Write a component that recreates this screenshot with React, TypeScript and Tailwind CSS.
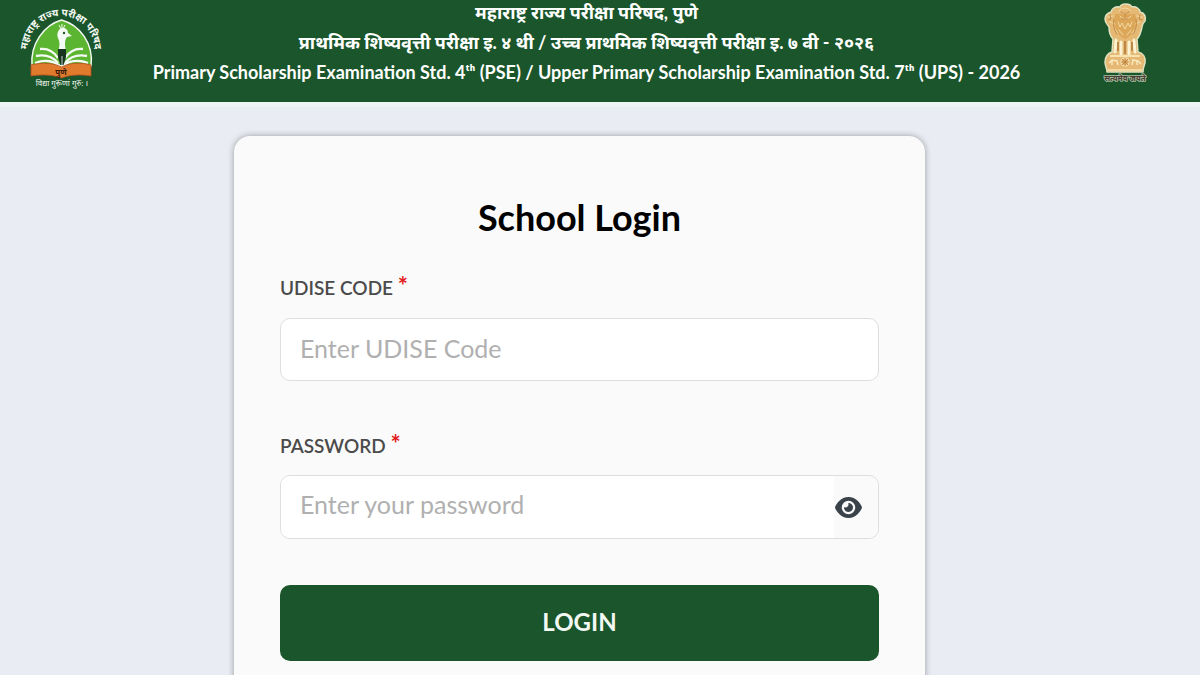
import React, { useState } from "react";
import { FaEye, FaEyeSlash } from "react-icons/fa6";

const CouncilLogo = () => (
  <svg
    viewBox="0 0 84 84"
    className="h-[84px] w-[84px] shrink-0 overflow-visible"
    role="img"
    aria-label="महाराष्ट्र राज्य परीक्षा परिषद"
  >
    <defs>
      <path id="logo-arc" d="M7 53 C4 -3 78 -3 75 53" />
    </defs>
    <text fill="#f4faf4" fontSize="10" fontWeight="700">
      <textPath href="#logo-arc" startOffset="50%" textAnchor="middle">
        महाराष्ट्र राज्य परीक्षा परिषद
      </textPath>
    </text>
    <path
      d="M12 61 C10 39 24 20 41.500 15 C60 20 74 39 71 61 Z"
      fill="#5cb531"
      stroke="#f4faf4"
      strokeWidth="1.500"
    />
    {/* open book */}
    <g fill="none" stroke="#f4faf4" strokeWidth="2.400">
      <path d="M15 58 C25 54 35 56 41 62 C48 56 58 54 68 58" />
      <path d="M16 51 C26 49 33 52 38 58" />
      <path d="M67 51 C57 49 50 52 45 58" />
      <path d="M20 44 C28 43 34 47 38 53" />
      <path d="M63 44 C55 43 49 47 45 53" />
    </g>
    {/* bird and nib */}
    <path
      d="M38 46 C40 41 40 37 38 33 C36 28 39 23 43 23 C46 23 48 25 48 28 L52 31 L47 32 C44 36 45 41 46 46 Z"
      fill="#f4faf4"
    />
    <path d="M41 24 L39 20 M42 24 V19 M43 24 L45 20" stroke="#f4faf4" strokeWidth="1" />
    <circle cx="44" cy="28" r="1.200" fill="#245b2b" />
    <path d="M38 44 H46 V52 L43.500 60 H40.500 L38 52 Z" fill="#17351f" />
    <path d="M42 51 V61" stroke="#f4faf4" strokeWidth="0.800" />
    <path
      d="M11 60 C23 57 34 58 41.500 62 C49 58 60 57 71 60 V71 C60 69 49 70 41.500 73 C34 70 23 69 11 71 Z"
      fill="#e07b2d"
      stroke="#b84e20"
      strokeWidth="0.800"
    />
    <text x="41" y="70" textAnchor="middle" fill="#3a1c10" fontSize="8" fontWeight="700">
      पुणे
    </text>
    <text x="42" y="81" textAnchor="middle" fill="#f4faf4" fontSize="8">
      विद्या गुरूणां गुरु: ।
    </text>
  </svg>
);

const Emblem = () => (
  <svg
    viewBox="0 0 48 84"
    className="mt-0.5 h-[84px] w-12 shrink-0"
    role="img"
    aria-label="सत्यमेव जयते"
  >
    <path
      d="M19 5 C20 1 29 1 31 5 C35 4 39 7 39 10 C44 11 45 15 44 19 C42 21 41 22 41 25 C40 30 39 34 36 37 L37 50 C42 51 45 55 44 61 C43 64 42 66 42 70 H6 C6 66 4 64 4 60 C4 55 7 51 11 50 L12 37 C9 34 8 30 8 25 C7 23 4 21 4 17 C4 13 7 11 10 10 C11 6 15 4 19 5 Z"
      fill="#e5b873"
      stroke="#dfe3c0"
      strokeWidth="1.500"
      strokeLinejoin="round"
    />
    {/* manes and faces of the lions */}
    <path d="M14 12 C12 23 15 33 24 37 C33 33 37 23 34 12 Z" fill="#dda75a" />
    <g fill="none" stroke="#f1d9a3" strokeWidth="1" strokeLinecap="round">
      <path d="M18 9 C20 5 28 5 30 9 M19 14 C22 18 27 18 30 14" />
      <path d="M7 15 L12 14 M41 15 L36 14 M9 20 L14 22 M39 20 L34 22" />
      <path d="M17 20 L19 25 L21 21 L24 27 L27 21 L29 25 L31 20" />
      <path d="M13 26 L17 31 M35 26 L31 31 M18 28 L22 33 M30 28 L26 33" />
    </g>
    <g fill="none" stroke="#c08a45" strokeWidth="1" strokeLinecap="round">
      <path d="M20 10 L22 11 M26 11 L28 10 M24 11 V15 M21 17 H27" />
      <path d="M9 13 L10 17 L7 18 M39 13 L38 17 L41 18" />
      <path d="M13 17 C12 23 13 28 16 32 M35 17 C36 23 35 28 32 32" />
    </g>
    <g stroke="#fbf2d2" strokeWidth="3" strokeLinecap="round">
      <path d="M15 38 L14 50 M20 40 V52 M28 40 V52 M33 38 L34 50" />
    </g>
    <path d="M17 40 V49 M24 39 V52 M31 40 V49" stroke="#ad7737" strokeWidth="1.500" />
    <path d="M9 54 H39" stroke="#f7e3b0" strokeWidth="2" />
    <circle cx="24" cy="60" r="4" fill="none" stroke="#f8e8bd" strokeWidth="1.200" />
    <path
      d="M24 56 V64 M20 60 H28 M21 57 L27 63 M27 57 L21 63"
      stroke="#b67a36"
      strokeWidth="0.700"
    />
    <path
      d="M8 61 L11 58 L16 59 L17 63 M31 63 L32 58 L37 59 L40 62 M11 59 V63 M36 59 V63"
      fill="none"
      stroke="#f8e8bd"
      strokeWidth="1.500"
    />
    <path d="M7 68 H41" stroke="#f7e3b0" strokeWidth="1.500" />
    <text
      x="24"
      y="79"
      textAnchor="middle"
      fontSize="8"
      fontWeight="700"
      fill="#493f34"
      stroke="#a8bda0"
      strokeWidth="1.500"
      paintOrder="stroke"
    >
      सत्यमेव जयते
    </text>
  </svg>
);

const Header = () => (
  <header className="flex items-start border-b-[5px] border-[#eef3f3] bg-[#1a552b] pr-[51px] pl-5 text-white">
    <div className="pt-[5px]">
      <CouncilLogo />
    </div>
    <div className="-mt-[3px] flex h-[105px] flex-1 flex-col pr-8 text-center text-lg leading-[30px] font-bold">
      <p>महाराष्ट्र राज्य परीक्षा परिषद, पुणे</p>
      <p>प्राथमिक शिष्यवृत्ती परीक्षा इ. ४ थी / उच्च प्राथमिक शिष्यवृत्ती परीक्षा इ. ७ वी - २०२६</p>
      <p>
        Primary Scholarship Examination Std. 4ᵗʰ (PSE) / Upper Primary Scholarship Examination Std.
        7ᵗʰ (UPS) - 2026
      </p>
    </div>
    <Emblem />
  </header>
);

const Required = () => (
  <span className="text-2xl leading-none font-bold text-[#e21b1b]">*</span>
);

const App = () => {
  const [showPassword, setShowPassword] = useState(false);

  return (
    <div className="min-h-screen bg-[#e9ecf2] font-['Lato','Noto_Sans',sans-serif]">
      <Header />
      <main className="flex justify-center pt-[29px] pr-[41px]">
        <form
          className="w-full max-w-[691px] rounded-t-2xl bg-[#fafafa] px-[46px] pt-[57px] pb-16 shadow-[0_0_6px_rgba(0,0,0,0.35)]"
          onSubmit={(e) => e.preventDefault()}
        >
          <h1 className="text-center text-4xl leading-[48px] font-bold text-black">School Login</h1>

          <label
            htmlFor="udise"
            className="mt-[33px] block h-7 text-[19px] leading-7 font-semibold text-[#4b4b4b]"
          >
            UDISE CODE <Required />
          </label>
          <input
            id="udise"
            type="text"
            placeholder="Enter UDISE Code"
            className="mt-4 block h-[63px] w-full rounded-[10px] border border-[#dedede] bg-white px-[19px] pb-1 text-[25px] text-[#333] outline-none placeholder:text-[#b0b0b0]"
          />

          <label
            htmlFor="password"
            className="mt-[51px] block h-7 text-[19px] leading-7 font-semibold text-[#4b4b4b]"
          >
            PASSWORD <Required />
          </label>
          <div className="mt-[15px] flex h-16 overflow-hidden rounded-[10px] border border-[#dedede]">
            <input
              id="password"
              type={showPassword ? "text" : "password"}
              placeholder="Enter your password"
              className="min-w-0 flex-1 bg-white px-[19px] pb-1 text-[25px] text-[#333] outline-none placeholder:text-[#b0b0b0]"
            />
            <button
              type="button"
              aria-label={showPassword ? "Hide password" : "Show password"}
              className="flex w-11 items-center bg-[#fafafa] pl-px text-[27px] text-[#3b434a]"
              onClick={() => setShowPassword(!showPassword)}
            >
              {showPassword ? <FaEyeSlash /> : <FaEye />}
            </button>
          </div>

          <button
            type="submit"
            className="mt-[46px] h-[76px] w-full rounded-[10px] bg-[#1a552b] pb-0.5 text-2xl font-bold text-[#f3f8f3]"
          >
            LOGIN
          </button>
        </form>
      </main>
    </div>
  );
};

export default App;
